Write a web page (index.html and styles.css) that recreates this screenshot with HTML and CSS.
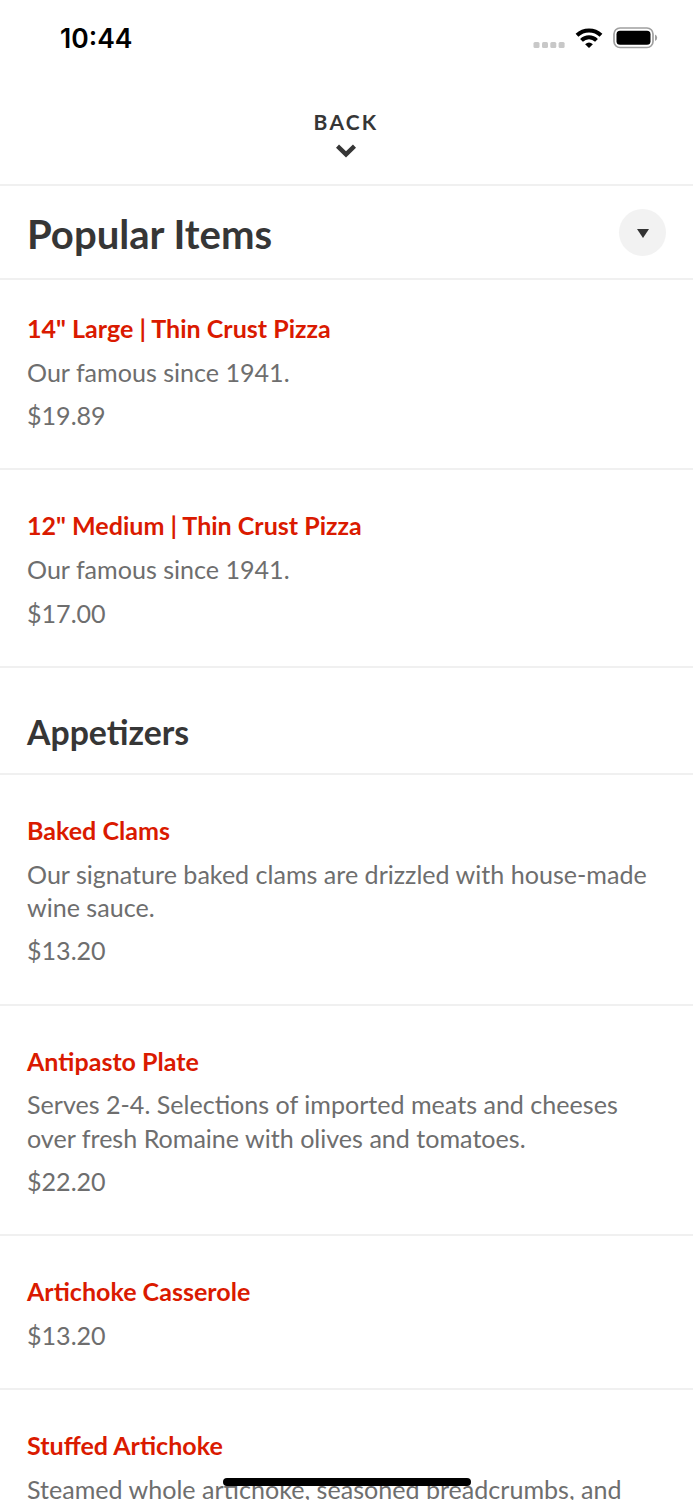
FILE: index.html
```html
<!DOCTYPE html>
<html lang="en">
<head>
<meta charset="utf-8">
<title>Popular Items</title>
<link rel="stylesheet" href="styles.css">
</head>
<body>
<main class="screen">
  <div class="status">
    <span class="time">10:44</span>
    <div class="indicators">
      <svg class="signal" width="32" height="8" viewBox="0 0 32 8"><g fill="#c8c8c8"><rect x="0.5" y="1" width="6" height="6" rx="1.5"/><rect x="9" y="1" width="6" height="6" rx="1.5"/><rect x="17.300" y="1" width="6" height="6" rx="1.5"/><rect x="25.600" y="1" width="6" height="6" rx="1.5"/></g></svg>
      <svg class="wifi" width="28" height="20" viewBox="0 0 28 20"><g fill="none" stroke="#000" stroke-width="4"><path d="M2 7.200C8.700 0.800 19.300 0.800 26 7.200"/><path d="M6.500 12.400C10.700 8.200 17.300 8.200 21.500 12.400"/></g><path d="M14 20L10.100 16.300Q14 12.900 17.900 16.300Z"/></svg>
      <svg class="battery" width="45" height="22" viewBox="0 0 45 22"><rect x="1" y="1" width="39" height="19.500" rx="6" fill="none" stroke="#a0a0a0" stroke-width="1.700"/><rect x="3.500" y="3.700" width="34" height="14" rx="3.500"/><path d="M42 7.500Q44.200 8.500 44.200 10.800T42 14Z" fill="#a0a0a0"/></svg>
    </div>
  </div>
  <header class="back">
    <span class="back-label">BACK</span>
    <svg width="20" height="14" viewBox="0 0 20 14"><path d="M1.500 2.200L10 10.400L18.500 2.200" fill="none" stroke="#363636" stroke-width="4.400"/></svg>
  </header>
  <section class="popular">
    <h1>Popular Items</h1>
    <button class="toggle" aria-label="Choose category"><svg width="12" height="9" viewBox="0 0 12 9"><path d="M0 0H12L6 9Z" fill="#333"/></svg></button>
  </section>
  <article class="item first"><h3>14" Large | Thin Crust Pizza</h3><p>Our famous since 1941.</p><p class="price">$19.89</p></article>
  <article class="item"><h3>12" Medium | Thin Crust Pizza</h3><p>Our famous since 1941.</p><p class="price">$17.00</p></article>
  <h2>Appetizers</h2>
  <article class="item"><h3>Baked Clams</h3><p>Our signature baked clams are drizzled with house-made<br>wine sauce.</p><p class="price">$13.20</p></article>
  <article class="item"><h3>Antipasto Plate</h3><p>Serves 2-4. Selections of imported meats and cheeses<br>over fresh Romaine with olives and tomatoes.</p><p class="price">$22.20</p></article>
  <article class="item"><h3>Artichoke Casserole</h3><p class="price">$13.20</p></article>
  <article class="item"><h3>Stuffed Artichoke</h3><p>Steamed whole artichoke, seasoned breadcrumbs, and</p></article>
  <div class="home-indicator"></div>
</main>
</body>
</html>
```
FILE: styles.css
```css
* { box-sizing: border-box; }
body, h1, h2, h3, p { margin: 0; }
body { background: #fff; color: #363636; font-family: Lato, sans-serif; }
.screen { position: relative; height: 1500px; overflow: hidden; }
.status { height: 76px; padding: 0 35px 0 60px; display: flex; justify-content: space-between; align-items: center; }
.time { color: #000; font: 600 26.500px/30px Inter, sans-serif; }
.indicators { display: flex; align-items: center; }
.signal { margin: 13px 10px 0 0; }
.wifi { margin-right: 10px; }
.back { height: 110px; padding-top: 33px; border-bottom: 2px solid #f0f0f0; display: flex; flex-direction: column; align-items: center; }
.back-label { font-size: 21px; line-height: 25px; font-weight: 700; letter-spacing: 2.200px; margin-right: 1px; }
.back svg { margin: 10px 2px 0 0; }
.popular { height: 94px; padding: 0 27px; border-bottom: 2px solid #f0f0f0; display: flex; align-items: center; justify-content: space-between; }
h1 { font-size: 40.100px; line-height: 48px; font-weight: 700; padding-top: 3px; }
.toggle { width: 47px; height: 47px; border: 0; border-radius: 50%; padding: 2px 0 0 1px; background: #f2f2f2; display: flex; align-items: center; justify-content: center; }
.item { padding: 38px 27px 35.800px; border-bottom: 2px solid #f0f0f0; color: #6e6e6e; font-size: 25.080px; line-height: 33.400px; }
.item.first { padding-top: 31px; }
.item h3 { color: #da1a00; font-size: 25.060px; line-height: 34px; font-weight: 700; }
.item p { margin-top: 10px; }
.item h3 + p { margin-top: 10.800px; }
h2 { height: 107px; padding: 43px 27px 0; border-bottom: 2px solid #f0f0f0; font-size: 33.800px; line-height: 42px; font-weight: 700; }
.home-indicator { position: absolute; bottom: 14px; left: 222.500px; width: 248px; height: 8px; border-radius: 4px; background: #000; }
```
